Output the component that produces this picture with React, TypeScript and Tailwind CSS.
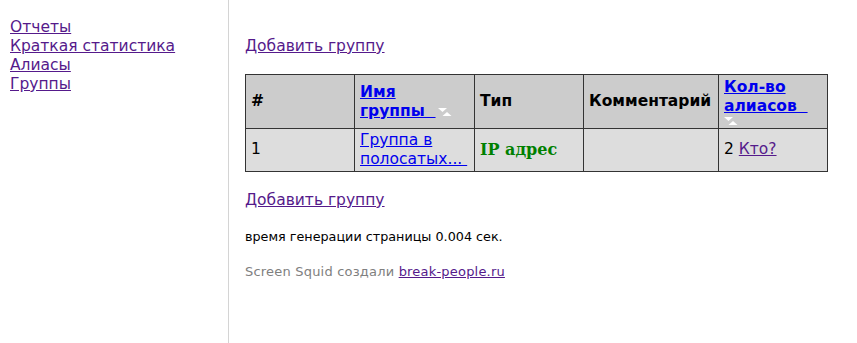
const sans = "font-['DejaVu_Sans',Verdana,sans-serif]";

function SortIcon({ block }: { block?: boolean }) {
  return (
    <svg
      width="14"
      height="9"
      viewBox="0 0 14 9"
      className={block ? "block mt-[1px]" : "inline-block ml-[2px] align-[-1px]"}
    >
      <polygon points="0,0 9,0 4.5,4" fill="#fff" />
      <polygon points="4.5,8 13.5,8 9,4" fill="#fff" />
    </svg>
  );
}

export default function App() {
  return (
    <div className={`flex min-h-[343px] bg-white text-black ${sans}`}>
      {/* sidebar */}
      <div className="w-[229px] shrink-0 border-r border-[#d4d4d4] pl-[10px] pt-[18px]">
        <div className="flex flex-col text-[15.5px] leading-[19px]">
          <a href="#" className="text-[#551a8b] underline self-start">Отчеты</a>
          <a href="#" className="text-[#551a8b] underline self-start">Краткая статистика</a>
          <a href="#" className="text-[#551a8b] underline self-start">Алиасы</a>
          <a href="#" className="text-[#551a8b] underline self-start">Группы</a>
        </div>
      </div>

      {/* main */}
      <div className="flex-1 pl-[16px] pt-[34px] pr-[29px]">
        <a href="#" className="text-[15.5px] leading-[19px] text-[#551a8b] underline">Добавить группу</a>

        <table className="mt-[16px] w-[583px] border-collapse border border-[#333] text-[15.5px]">
          <thead>
            <tr className="h-[54px] bg-[#cccccc]">
              <th className="w-[109px] border border-[#333] px-[5px] text-left font-bold">#</th>
              <th className="w-[120px] border border-[#333] px-[5px] text-left font-bold leading-[19px]">
                <a href="#" className="text-[#0000ee] underline">Имя<br />группы&nbsp;&nbsp;</a>
                <SortIcon />
              </th>
              <th className="w-[109px] border border-[#333] px-[5px] text-left font-bold">Тип</th>
              <th className="w-[135px] border border-[#333] px-[5px] text-left font-bold">Комментарий</th>
              <th className="border border-[#333] px-[5px] pt-[1px] text-left font-bold leading-[19px]">
                <a href="#" className="text-[#0000ee] underline">Кол-во<br />алиасов&nbsp;&nbsp;</a>
                <SortIcon block />
              </th>
            </tr>
          </thead>
          <tbody>
            <tr className="h-[43px] bg-[#dddddd]">
              <td className="border border-[#333] px-[5px]">1</td>
              <td className="border border-[#333] px-[5px] leading-[19px]">
                <a href="#" className="text-[#0000ee] underline">Группа в<br />полосатых...&nbsp;</a>
              </td>
              <td className="border border-[#333] px-[5px] font-['DejaVu_Serif',Georgia,serif] font-bold text-[16px] text-[#008000]">
                IP адрес
              </td>
              <td className="border border-[#333] px-[5px]"></td>
              <td className="border border-[#333] px-[5px]">
                2 <a href="#" className="text-[#551a8b] underline">Кто?</a>
              </td>
            </tr>
          </tbody>
        </table>

        <div className="mt-[16px]">
          <a href="#" className="text-[15.5px] leading-[19px] text-[#551a8b] underline">Добавить группу</a>
        </div>

        <p className="mt-[17px] text-[12.75px] leading-[15px]">время генерации страницы 0.004 сек.</p>

        <p className="mt-[20px] text-[13px] tracking-[0.2px] leading-[15px] text-[#808080]">
          Screen Squid создали{" "}
          <a href="#" className="text-[#551a8b] underline">break-people.ru</a>
        </p>
      </div>
    </div>
  );
}
